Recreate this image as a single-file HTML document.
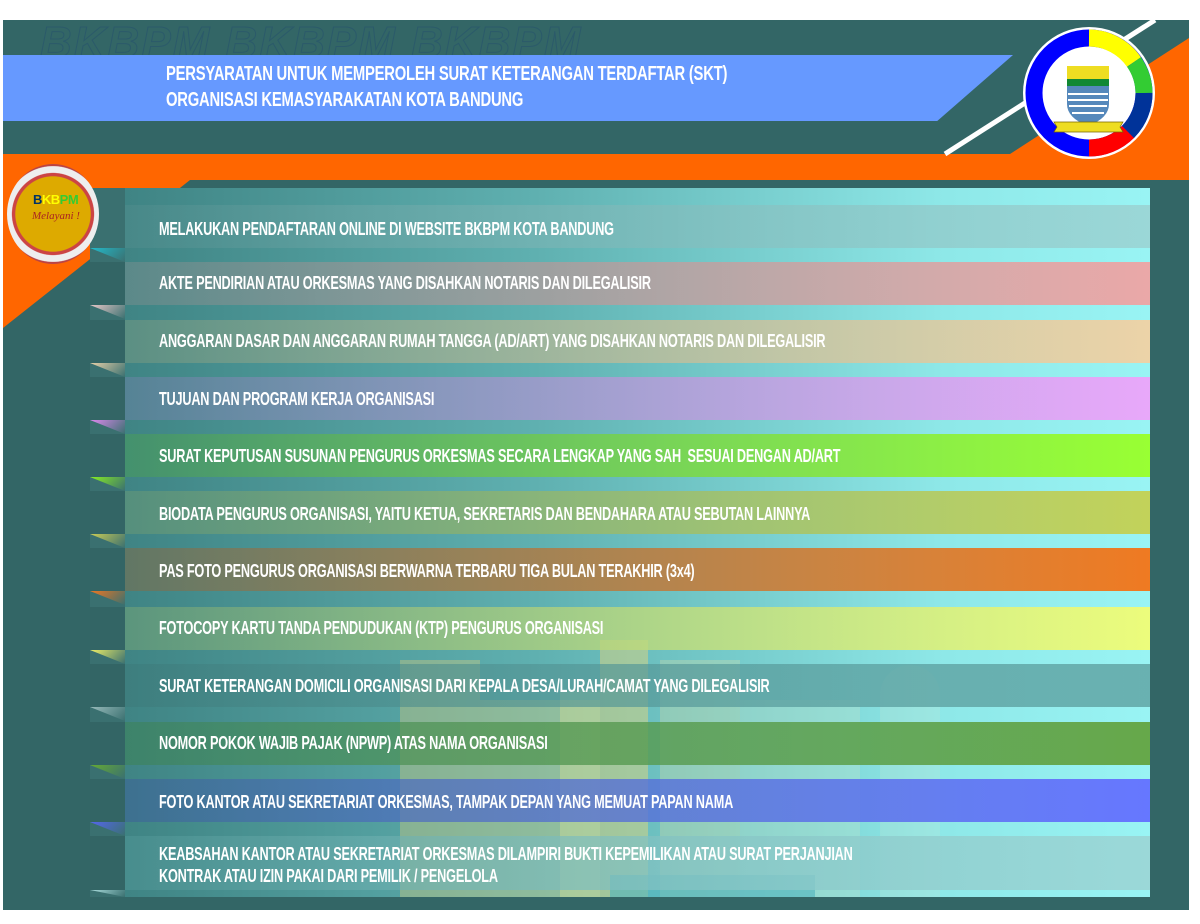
<!DOCTYPE html>
<html><head><meta charset="utf-8"><style>
*{margin:0;padding:0;box-sizing:border-box}
body{width:1200px;height:924px;background:#fff;position:relative;overflow:hidden;font-family:"Liberation Sans",sans-serif;}
.abs{position:absolute}
.t{position:absolute;color:#fff;font-weight:bold;font-size:18px;letter-spacing:-0.3px;white-space:nowrap;transform-origin:left center;transform:scaleX(0.706)}
.row{position:absolute;left:125px;width:1025px;height:43px}
.tab{position:absolute;left:90px;width:35px;height:43px;background:rgba(40,80,80,0.35)}
.tri{position:absolute;left:90px;width:35px;height:14px;clip-path:polygon(0 0,100% 0,100% 100%)}
</style></head><body>
<div class="abs" style="left:3px;top:20px;width:1186px;height:890px;background:#336666"></div>
<div class="abs" style="left:40px;top:18px;font-size:44px;font-style:italic;font-weight:bold;color:transparent;-webkit-text-stroke:1px #2b5a6a;letter-spacing:2px;white-space:nowrap">BKBPM BKBPM BKBPM</div>
<div class="abs" style="left:3px;top:55px;width:1010px;height:66px;background:#6699ff;clip-path:polygon(0 0,100% 0,92.5% 100%,0 100%)"></div>
<svg class="abs" style="left:0;top:0" width="1200" height="330">
<polygon points="3,154 1010,154 1189,38 1189,180 190,180 3,328" fill="#ff6600"/>
<line x1="945" y1="154" x2="1155" y2="20" stroke="#fff" stroke-width="5"/>
</svg>
<div class="t" style="left:166px;top:63px;font-size:20px;transform:scaleX(0.74)">PERSYARATAN UNTUK MEMPEROLEH SURAT KETERANGAN TERDAFTAR (SKT)</div>
<div class="t" style="left:166px;top:89px;font-size:20px;transform:scaleX(0.74)">ORGANISASI KEMASYARAKATAN KOTA BANDUNG</div>
<!-- Bandung logo -->
<svg class="abs" style="left:1022px;top:26px" width="136" height="136" viewBox="0 0 136 136">
<circle cx="67" cy="67" r="66" fill="#fff"/>
<circle cx="67" cy="67" r="55" fill="none" stroke="#0000ff" stroke-width="17"/>
<path d="M67 12 A55 55 0 0 1 112 36" fill="none" stroke="#ffff00" stroke-width="17"/>
<path d="M112 36 A55 55 0 0 1 122 67" fill="none" stroke="#33cc33" stroke-width="17"/>
<path d="M122 67 A55 55 0 0 1 106 106" fill="none" stroke="#003399" stroke-width="17"/>
<path d="M106 106 A55 55 0 0 1 67 122" fill="none" stroke="#ff0000" stroke-width="17"/>
<path d="M45 40 H87 V78 Q87 92 66 100 Q45 92 45 78 Z" fill="#5588bb"/>
<rect x="45" y="40" width="42" height="15" fill="#eedd22"/>
<rect x="45" y="53" width="42" height="7" fill="#118833"/>
<path d="M46 68 H86 M46 74 H86 M47 80 H85 M50 87 H82" stroke="#fff" stroke-width="2"/>
<path d="M32 96 H101 L98 101 L101 106 H32 L35 101 Z" fill="#eedd22" stroke="#776600" stroke-width="0.7"/>
</svg>
<!-- content -->
<div class="abs" style="left:125px;top:188px;width:1025px;height:709px;background:linear-gradient(90deg,#3f8484,#5fb0b0 40%,#8ee8e8 80%,#99f4f4)"></div>
<div class="abs" style="left:90px;top:188px;width:35px;height:709px;background:#3a7070"></div>
<!-- buildings -->
<div class="abs" style="left:400px;top:660px;width:80px;height:237px;background:rgba(230,210,120,0.35)"></div>
<div class="abs" style="left:480px;top:700px;width:120px;height:197px;background:rgba(230,210,120,0.35)"></div>
<div class="abs" style="left:600px;top:640px;width:48px;height:257px;background:rgba(235,215,120,0.45)"></div>
<div class="abs" style="left:560px;top:690px;width:40px;height:207px;background:rgba(220,230,150,0.35)"></div>
<div class="abs" style="left:660px;top:660px;width:80px;height:237px;background:rgba(210,220,170,0.35)"></div>
<div class="abs" style="left:740px;top:700px;width:120px;height:197px;background:rgba(200,230,200,0.3)"></div>
<div class="abs" style="left:880px;top:665px;width:60px;height:232px;background:rgba(200,230,210,0.25);border-radius:30px 30px 0 0"></div>
<div class="abs" style="left:610px;top:875px;width:205px;height:22px;background:rgba(80,180,190,0.6)"></div>

<div class="row" style="top:205px;background:linear-gradient(90deg,rgba(80,140,140,.5),rgba(155,212,212,.9))"></div>
<div class="row" style="top:262px;background:linear-gradient(90deg,rgba(110,140,140,.6),#eaa8a8)"></div>
<div class="row" style="top:320px;background:linear-gradient(90deg,rgba(110,150,130,.6),#ecd3a8)"></div>
<div class="row" style="top:377px;background:linear-gradient(90deg,rgba(100,130,160,.6),#e8a8fa)"></div>
<div class="row" style="top:434px;background:linear-gradient(90deg,rgba(70,150,100,.7),#99ff33)"></div>
<div class="row" style="top:491px;background:linear-gradient(90deg,rgba(100,150,120,.6),#c2d25a)"></div>
<div class="row" style="top:548px;background:linear-gradient(90deg,rgba(120,110,80,.6),#ef7a22)"></div>
<div class="row" style="top:607px;background:linear-gradient(90deg,rgba(110,160,120,.6),#ecfc7c)"></div>
<div class="row" style="top:664px;background:linear-gradient(90deg,rgba(60,120,120,.5),rgba(100,170,170,.9))"></div>
<div class="row" style="top:722px;background:linear-gradient(90deg,rgba(60,130,90,.6),#66a84a)"></div>
<div class="row" style="top:779px;background:linear-gradient(90deg,rgba(60,100,150,.6),#6677ff)"></div>
<div class="row" style="top:836px;height:54px;background:linear-gradient(90deg,rgba(80,150,150,.5),rgba(155,215,215,.95))"></div>

<div class="tab" style="top:262px"></div><div class="tab" style="top:320px"></div><div class="tab" style="top:377px"></div><div class="tab" style="top:434px"></div><div class="tab" style="top:491px"></div><div class="tab" style="top:548px"></div><div class="tab" style="top:607px"></div><div class="tab" style="top:664px"></div><div class="tab" style="top:722px"></div><div class="tab" style="top:779px"></div><div class="tab" style="top:836px;height:54px"></div>
<div class="tri" style="top:248px;background:linear-gradient(135deg,#22bbcc,#3a7070)"></div>
<div class="tri" style="top:305px;background:linear-gradient(135deg,#e8c8c8,#3a7070)"></div>
<div class="tri" style="top:363px;background:linear-gradient(135deg,#e8d0a8,#3a7070)"></div>
<div class="tri" style="top:420px;background:linear-gradient(135deg,#dd88ee,#3a7070)"></div>
<div class="tri" style="top:477px;background:linear-gradient(135deg,#88ee22,#3a7070)"></div>
<div class="tri" style="top:534px;background:linear-gradient(135deg,#cccc55,#3a7070)"></div>
<div class="tri" style="top:591px;background:linear-gradient(135deg,#ee7722,#3a7070)"></div>
<div class="tri" style="top:650px;background:linear-gradient(135deg,#eeee66,#3a7070)"></div>
<div class="tri" style="top:707px;background:linear-gradient(135deg,#99bbbb,#3a7070)"></div>
<div class="tri" style="top:765px;background:linear-gradient(135deg,#66aa33,#3a7070)"></div>
<div class="tri" style="top:822px;background:linear-gradient(135deg,#5566ee,#3a7070)"></div>
<div class="tri" style="top:890px;height:7px;background:linear-gradient(135deg,#aadddd,#3a7070)"></div>

<div class="t" style="left:159px;top:219px">MELAKUKAN PENDAFTARAN ONLINE DI WEBSITE BKBPM KOTA BANDUNG</div>
<div class="t" style="left:159px;top:273px">AKTE PENDIRIAN ATAU ORKESMAS YANG DISAHKAN NOTARIS DAN DILEGALISIR</div>
<div class="t" style="left:159px;top:331px">ANGGARAN DASAR DAN ANGGARAN RUMAH TANGGA (AD/ART) YANG DISAHKAN NOTARIS DAN DILEGALISIR</div>
<div class="t" style="left:159px;top:389px">TUJUAN DAN PROGRAM KERJA ORGANISASI</div>
<div class="t" style="left:159px;top:446px">SURAT KEPUTUSAN SUSUNAN PENGURUS ORKESMAS SECARA LENGKAP YANG SAH &nbsp;SESUAI DENGAN AD/ART</div>
<div class="t" style="left:159px;top:504px">BIODATA PENGURUS ORGANISASI, YAITU KETUA, SEKRETARIS DAN BENDAHARA ATAU SEBUTAN LAINNYA</div>
<div class="t" style="left:159px;top:561px">PAS FOTO PENGURUS ORGANISASI BERWARNA TERBARU TIGA BULAN TERAKHIR (3x4)</div>
<div class="t" style="left:159px;top:618px">FOTOCOPY KARTU TANDA PENDUDUKAN (KTP) PENGURUS ORGANISASI</div>
<div class="t" style="left:159px;top:676px">SURAT KETERANGAN DOMICILI ORGANISASI DARI KEPALA DESA/LURAH/CAMAT YANG DILEGALISIR</div>
<div class="t" style="left:159px;top:733px">NOMOR POKOK WAJIB PAJAK (NPWP) ATAS NAMA ORGANISASI</div>
<div class="t" style="left:159px;top:792px">FOTO KANTOR ATAU SEKRETARIAT ORKESMAS, TAMPAK DEPAN YANG MEMUAT PAPAN NAMA</div>
<div class="t" style="left:159px;top:844px">KEABSAHAN KANTOR ATAU SEKRETARIAT ORKESMAS DILAMPIRI BUKTI KEPEMILIKAN ATAU SURAT PERJANJIAN</div>
<div class="t" style="left:159px;top:866px">KONTRAK ATAU IZIN PAKAI DARI PEMILIK / PENGELOLA</div>

<!-- BKBPM logo -->
<div class="abs" style="left:7px;top:164px;width:92px;height:100px;border-radius:50%;background:radial-gradient(circle,#ddaa00 0 55%,#cc4444 56% 60%,#eee 61% 70%,#bb4444 71% 74%,#ddd 75% 88%,#886655 89% 100%)"></div>
<div class="abs" style="left:33px;top:192px;font-weight:bold;font-size:13px;letter-spacing:-0.5px"><span style="color:#003366">B</span><span style="color:#ffff00">K</span><span style="color:#ffff00">B</span><span style="color:#33cc33">PM</span></div>
<div class="abs" style="left:32px;top:210px;font-family:'Liberation Serif',serif;font-style:italic;font-size:11px;color:#aa2222">Melayani !</div>
</body></html>
